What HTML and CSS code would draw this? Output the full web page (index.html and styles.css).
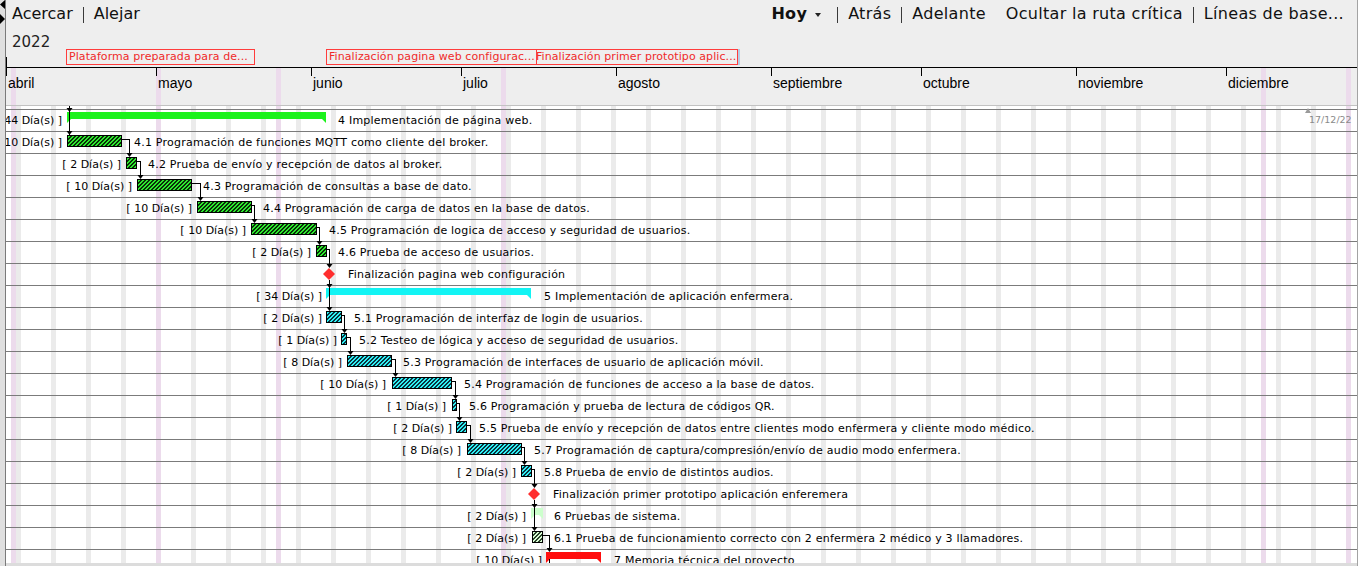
FILE: index.html
```html
<!DOCTYPE html>
<html lang="es">
<head>
<meta charset="utf-8">
<title>Diagrama de Gantt</title>
<link rel="stylesheet" href="styles.css">
</head>
<body>
<div class="app">
  <div class="side">
    <svg class="splitter" width="5" height="26" viewBox="0 0 5 26"><polygon points="5,0 5,9 0,4.5"/><polygon points="0,14 0,24 5,19"/></svg>
  </div>
  <div class="main">
    <header class="header">
      <nav class="toolbar">
        <div class="tb-group"><span>Acercar</span><i class="sep"></i><span>Alejar</span></div>
        <div class="tb-group right"><span class="hoy">Hoy</span><i class="caret"></i><i class="sep wide"></i><span>Atrás</span><i class="sep"></i><span>Adelante</span><span class="spaced">Ocultar la ruta crítica</span><i class="sep"></i><span>Líneas de base...</span></div>
      </nav>
      <div class="timescale">
        <div class="ts-holidays"></div>
        <div class="year">2022</div>
        <div class="ms-label" style="left:60px;width:189px">Plataforma preparada para de...</div>
        <div class="ms-label" style="left:527px;width:205px">Finalización primer prototipo aplic...</div>
        <div class="ms-label" style="left:320px;width:211px">Finalización pagina web configurac...</div>
        <div class="ms-edge" style="left:732px"></div>
        <div class="ts-line"></div>
        <i class="tick first" style="left:0"></i><span class="month" style="left:2px">abril</span>
        <i class="tick" style="left:150px"></i><span class="month" style="left:152px">mayo</span>
        <i class="tick" style="left:305px"></i><span class="month" style="left:307px">junio</span>
        <i class="tick" style="left:455px"></i><span class="month" style="left:457px">julio</span>
        <i class="tick" style="left:610px"></i><span class="month" style="left:612px">agosto</span>
        <i class="tick" style="left:765px"></i><span class="month" style="left:767px">septiembre</span>
        <i class="tick" style="left:915px"></i><span class="month" style="left:917px">octubre</span>
        <i class="tick" style="left:1070px"></i><span class="month" style="left:1072px">noviembre</span>
        <i class="tick" style="left:1220px"></i><span class="month" style="left:1222px">diciembre</span>
      </div>
    </header>
    <section class="chart">
      <div class="row">
        <span class="dur" style="left:56px">[ 44 Día(s) ]</span>
        <div class="summary g" style="left:61px;width:259px"></div>
        <span class="task" style="left:332px">4 Implementación de página web.</span>
        <i class="end-mark" style="left:1299px"></i>
        <span class="end-date" style="left:1303px">17/12/22</span>
      </div>
      <div class="row">
        <span class="dur" style="left:56px">[ 10 Día(s) ]</span>
        <div class="bar g" style="left:61px;width:55px"></div>
        <span class="task" style="left:128px">4.1 Programación de funciones MQTT como cliente del broker.</span>
      </div>
      <div class="row">
        <span class="dur" style="left:115px">[ 2 Día(s) ]</span>
        <div class="bar g" style="left:120px;width:11px"></div>
        <span class="task" style="left:142px">4.2 Prueba de envío y recepción de datos al broker.</span>
      </div>
      <div class="row">
        <span class="dur" style="left:126px">[ 10 Día(s) ]</span>
        <div class="bar g" style="left:131px;width:55px"></div>
        <span class="task" style="left:197px">4.3 Programación de consultas a base de dato.</span>
      </div>
      <div class="row">
        <span class="dur" style="left:186px">[ 10 Día(s) ]</span>
        <div class="bar g" style="left:191px;width:55px"></div>
        <span class="task" style="left:257px">4.4 Programación de carga de datos en la base de datos.</span>
      </div>
      <div class="row">
        <span class="dur" style="left:240px">[ 10 Día(s) ]</span>
        <div class="bar g" style="left:245px;width:66px"></div>
        <span class="task" style="left:323px">4.5 Programación de logica de acceso y seguridad de usuarios.</span>
      </div>
      <div class="row">
        <span class="dur" style="left:305px">[ 2 Día(s) ]</span>
        <div class="bar g" style="left:310px;width:11px"></div>
        <span class="task" style="left:332px">4.6 Prueba de acceso de usuarios.</span>
      </div>
      <div class="row">
        <div class="milestone" style="left:317px"></div>
        <span class="task" style="left:342px">Finalización pagina web configuración</span>
      </div>
      <div class="row">
        <span class="dur" style="left:316px">[ 34 Día(s) ]</span>
        <div class="summary c" style="left:320px;width:205px"></div>
        <span class="task" style="left:538px">5 Implementación de aplicación enfermera.</span>
      </div>
      <div class="row">
        <span class="dur" style="left:316px">[ 2 Día(s) ]</span>
        <div class="bar c" style="left:320px;width:16px"></div>
        <span class="task" style="left:348px">5.1 Programación de interfaz de login de usuarios.</span>
      </div>
      <div class="row">
        <span class="dur" style="left:331px">[ 1 Día(s) ]</span>
        <div class="bar c" style="left:335px;width:6px"></div>
        <span class="task" style="left:353px">5.2 Testeo de lógica y acceso de seguridad de usuarios.</span>
      </div>
      <div class="row">
        <span class="dur" style="left:336px">[ 8 Día(s) ]</span>
        <div class="bar c" style="left:341px;width:45px"></div>
        <span class="task" style="left:397px">5.3 Programación de interfaces de usuario de aplicación móvil.</span>
      </div>
      <div class="row">
        <span class="dur" style="left:380px">[ 10 Día(s) ]</span>
        <div class="bar c" style="left:386px;width:60px"></div>
        <span class="task" style="left:458px">5.4 Programación de funciones de acceso a la base de datos.</span>
      </div>
      <div class="row">
        <span class="dur" style="left:440px">[ 1 Día(s) ]</span>
        <div class="bar c" style="left:446px;width:5px"></div>
        <span class="task" style="left:463px">5.6 Programación y prueba de lectura de códigos QR.</span>
      </div>
      <div class="row">
        <span class="dur" style="left:446px">[ 2 Día(s) ]</span>
        <div class="bar c" style="left:450px;width:11px"></div>
        <span class="task" style="left:473px">5.5 Prueba de envío y recepción de datos entre clientes modo enfermera y cliente modo médico.</span>
      </div>
      <div class="row">
        <span class="dur" style="left:455px">[ 8 Día(s) ]</span>
        <div class="bar c" style="left:461px;width:55px"></div>
        <span class="task" style="left:528px">5.7 Programación de captura/compresión/envío de audio modo enfermera.</span>
      </div>
      <div class="row">
        <span class="dur" style="left:510px">[ 2 Día(s) ]</span>
        <div class="bar c" style="left:515px;width:11px"></div>
        <span class="task" style="left:538px">5.8 Prueba de envio de distintos audios.</span>
      </div>
      <div class="row">
        <div class="milestone" style="left:522px"></div>
        <span class="task" style="left:547px">Finalización primer prototipo aplicación enferemera</span>
      </div>
      <div class="row">
        <span class="dur" style="left:520px">[ 2 Día(s) ]</span>
        <div class="summary p" style="left:525px;width:12px"></div>
        <span class="task" style="left:548px">6 Pruebas de sistema.</span>
      </div>
      <div class="row">
        <span class="dur" style="left:520px">[ 2 Día(s) ]</span>
        <div class="bar p" style="left:526px;width:11px"></div>
        <span class="task" style="left:548px">6.1 Prueba de funcionamiento correcto con 2 enfermera 2 médico y 3 llamadores.</span>
      </div>
      <div class="row">
        <span class="dur" style="left:536px">[ 10 Día(s) ]</span>
        <div class="summary r" style="left:540px;width:55px"></div>
        <span class="task" style="left:608px">7 Memoria técnica del proyecto</span>
      </div>
      <svg class="links" width="1351" height="457" viewBox="0 0 1351 457">
        <path class="link" d="M63.5 0V29M116 33.5H123.5V49M131 55.5H134.5V71M186 77.5H194.5V93M246 99.5H248.5V115M311 121.5H313.5V137M321 143.5H323.5V160M323.5 174V203M336 209.5H338.5V225M341 231.5H344.5V247M386 253.5H389.5V269M446 275.5H449.5V291M451 297.5H453.5V313M461 319.5H464.5V335M516 341.5H518.5V357M526 363.5H528.5V380M528.5 394V423M537 429.5H543.5V444M543.5 453V457"/>
        <g class="heads">
          <polygon points="60.5,2 66.5,2 63.5,6"/>
          <polygon points="60.5,25 66.5,25 63.5,29"/>
          <polygon points="120.5,47 126.5,47 123.5,51"/>
          <polygon points="131.5,69 137.5,69 134.5,73"/>
          <polygon points="191.5,91 197.5,91 194.5,95"/>
          <polygon points="245.5,113 251.5,113 248.5,117"/>
          <polygon points="310.5,135 316.5,135 313.5,139"/>
          <polygon points="320.5,158 326.5,158 323.5,162"/>
          <polygon points="320.5,178 326.5,178 323.5,182"/>
          <polygon points="320.5,201 326.5,201 323.5,205"/>
          <polygon points="335.5,223 341.5,223 338.5,227"/>
          <polygon points="341.5,245 347.5,245 344.5,249"/>
          <polygon points="386.5,267 392.5,267 389.5,271"/>
          <polygon points="446.5,289 452.5,289 449.5,293"/>
          <polygon points="450.5,311 456.5,311 453.5,315"/>
          <polygon points="461.5,333 467.5,333 464.5,337"/>
          <polygon points="515.5,355 521.5,355 518.5,359"/>
          <polygon points="525.5,378 531.5,378 528.5,382"/>
          <polygon points="525.5,398 531.5,398 528.5,402"/>
          <polygon points="525.5,421 531.5,421 528.5,425"/>
          <polygon points="540.5,442 546.5,442 543.5,446"/>
        </g>
      </svg>
    </section>
    <div class="hscroll"></div>
  </div>
</div>
</body>
</html>
```

FILE: styles.css
```css
:root {
  --holiday: #ecdbec;
  --holidays: linear-gradient(to right,
    transparent 5px, var(--holiday) 5px 10px,
    transparent 10px 150px, var(--holiday) 150px 155px,
    transparent 155px 270px, var(--holiday) 270px 275px,
    transparent 275px 495px, var(--holiday) 495px 500px,
    transparent 500px 1255px, var(--holiday) 1255px 1260px,
    transparent 1260px 1340px, var(--holiday) 1340px 1345px,
    transparent 1345px);
  --sundays: repeating-linear-gradient(to right,
    transparent 0 10px, #ebebeb 10px 15px, transparent 15px 35px);
}

* { box-sizing: border-box; }

html, body {
  margin: 0;
  padding: 0;
}

body {
  background: #ffffff;
  font-family: "DejaVu Sans", "Noto Sans", sans-serif;
  color: #000;
}

.app {
  display: flex;
  width: 1361px;
  height: 566px;
  overflow: hidden;
}

.side {
  flex: 0 0 5px;
  background: #dfdfdf;
}

.splitter {
  display: block;
  fill: #000;
}

.main {
  flex: 0 0 1353px;
  min-width: 0;
  display: flex;
  flex-direction: column;
  border-left: 1px solid #7a7a7a;
  border-right: 1px solid #a3a3a3;
}

/* ---------- header ---------- */
.header {
  flex: 0 0 106px;
  display: flex;
  flex-direction: column;
  background: #eeeeee;
  border-bottom: 1px solid #c2c2c2;
}

.toolbar {
  flex: 0 0 28px;
  display: flex;
  justify-content: space-between;
  align-items: center;
  padding: 0 13px 0 6px;
  font-size: 16px;
  line-height: 28px;
  color: #111;
}

.tb-group {
  display: flex;
  align-items: center;
  white-space: nowrap;
}

.tb-group.right { letter-spacing: 0.3px; }

.sep {
  display: inline-block;
  width: 1px;
  height: 16px;
  margin: 1px 10px 0;
  background: #3a3a3a;
}

.sep.wide { margin-left: 16px; }

.hoy { font-weight: bold; }

.caret {
  display: inline-block;
  width: 0;
  height: 0;
  margin: 1px 0 0 8px;
  border-left: 3.5px solid transparent;
  border-right: 3.5px solid transparent;
  border-top: 4px solid #222;
}

.spaced { margin-left: 20px; }

.timescale {
  position: relative;
  flex: 1;
}

.ts-holidays {
  position: absolute;
  left: 0;
  right: 0;
  top: 39px;
  bottom: 0;
  background-image: var(--holidays);
}

.year {
  position: relative;
  padding: 6px 0 0 6px;
  font-size: 15px;
  line-height: 17px;
  color: #222;
}

.ms-label {
  position: absolute;
  top: 21px;
  height: 16px;
  padding: 0 1px 0 2px;
  border: 1px solid #ff3c3c;
  background: #efefef;
  color: #f02a2a;
  font-size: 11px;
  letter-spacing: 0.08px;
  line-height: 14px;
  white-space: nowrap;
  overflow: hidden;
}

.ms-edge {
  position: absolute;
  top: 21px;
  width: 2px;
  height: 16px;
  background: #b5cde5;
}

.ts-line {
  position: absolute;
  left: 0;
  right: 0;
  top: 39px;
  height: 1px;
  background: #000;
}

.tick {
  position: absolute;
  top: 39px;
  width: 1px;
  height: 9px;
  background: #000;
}

.tick.first {
  top: 29px;
  height: 19px;
}

.month {
  position: absolute;
  top: 47px;
  font-family: "Liberation Sans", Arial, sans-serif;
  font-size: 14px;
  line-height: 16px;
  color: #000;
  white-space: nowrap;
}

/* ---------- chart ---------- */
.chart {
  position: relative;
  flex: 1;
  overflow: hidden;
  padding-top: 3px;
  background-color: #fff;
  background-image: var(--holidays), var(--sundays);
  font-size: 11px;
  letter-spacing: 0.22px;
}

.row {
  position: relative;
  height: 22px;
  border-top: 1px solid #7b7b7b;
  line-height: 21px;
  white-space: nowrap;
}

.dur, .task {
  position: absolute;
  top: 0;
  color: #000;
}

.dur {
  letter-spacing: 0;
  transform: translateX(-100%);
}

.bar {
  position: absolute;
  top: 3px;
  height: 12px;
  border: 1px solid #000;
}

.bar.g {
  background: repeating-linear-gradient(135deg, #2ee82e 0 1.8px, #082f08 1.8px 2.83px);
}

.bar.c {
  background: repeating-linear-gradient(135deg, #2ef0f4 0 1.8px, #0a3340 1.8px 2.83px);
}

.bar.p {
  background: repeating-linear-gradient(135deg, #d8fcd4 0 1.8px, #2a422a 1.8px 2.83px);
}

.summary {
  position: absolute;
  top: 2px;
  height: 11px;
  clip-path: polygon(0 0, 100% 0, 100% 100%, calc(100% - 4px) 7px, 4px 7px, 0 100%);
}

.summary.g { background: #1cf21c; }
.summary.c { background: #12f4f4; }
.summary.p { background: #ccffcc; }
.summary.r { background: #ff0d0d; }

.milestone {
  position: absolute;
  top: 4px;
  width: 12px;
  height: 12px;
  background: #ff2e2e;
  clip-path: polygon(50% 0, 100% 50%, 50% 100%, 0 50%);
}

.end-mark {
  position: absolute;
  top: -2px;
  width: 0;
  height: 0;
  border-left: 3px solid transparent;
  border-right: 3px solid transparent;
  border-bottom: 5px solid #9a9a9a;
}

.end-date {
  position: absolute;
  top: -1px;
  font-size: 9.5px;
  letter-spacing: 0;
  color: #8a8a8a;
}

.links {
  position: absolute;
  left: 0;
  top: 0;
  pointer-events: none;
}

.link {
  fill: none;
  stroke: #000;
  stroke-width: 1;
  shape-rendering: crispEdges;
}

.heads polygon { fill: #000; }

.hscroll {
  flex: 0 0 3px;
  background: #dcdcdc;
}
```
